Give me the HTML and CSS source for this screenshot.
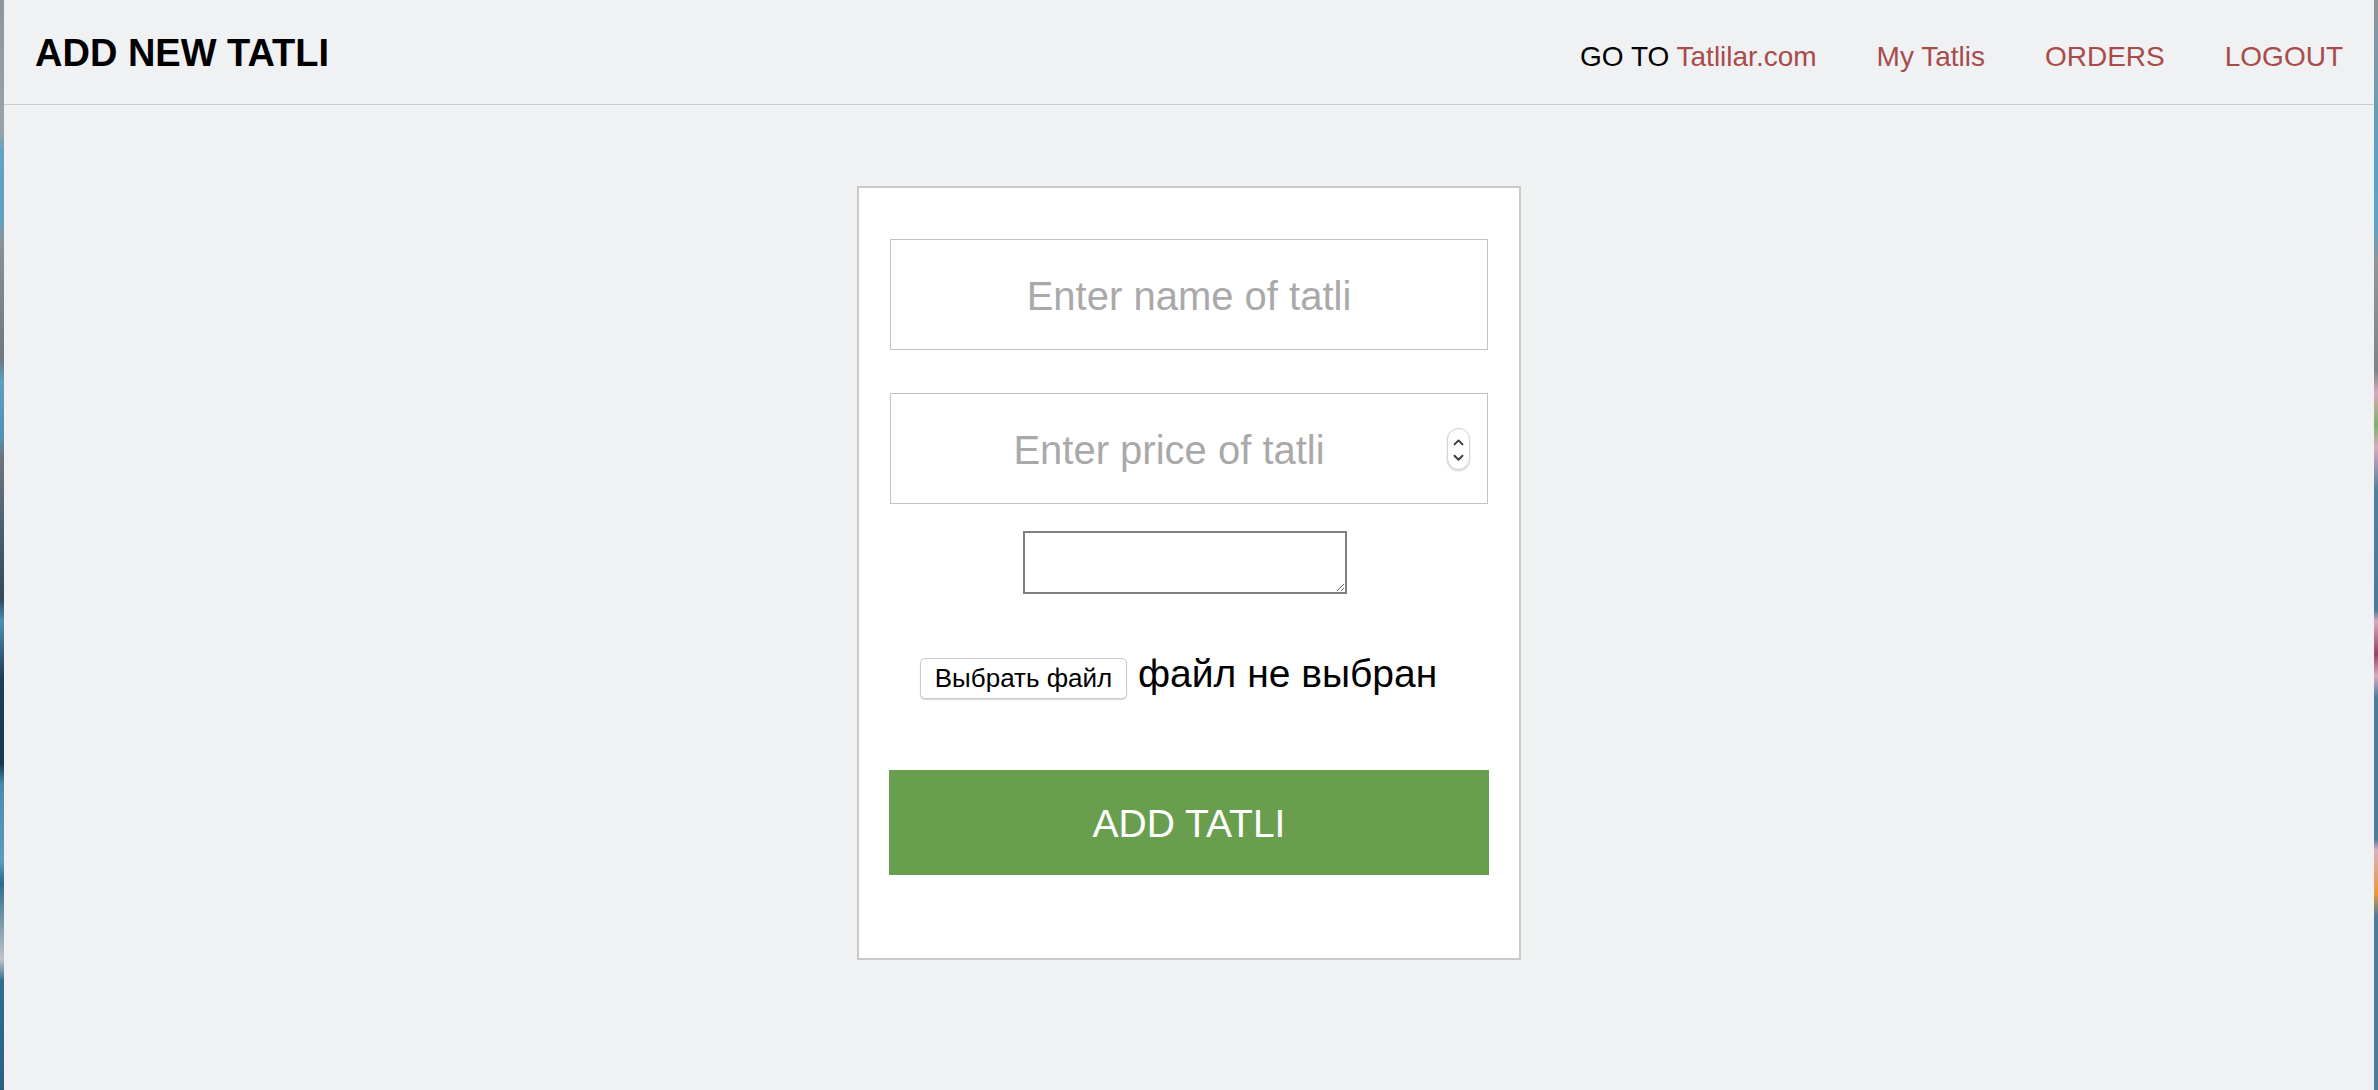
FILE: index.html
```html
<!DOCTYPE html>
<html lang="en">
<head>
<meta charset="utf-8">
<title>Add new tatli</title>
<link rel="stylesheet" href="styles.css">
</head>
<body>
<div class="screen">
  <div class="edge edge-left"></div>
  <div class="page">
    <header class="topbar">
      <h1 class="title">ADD NEW TATLI</h1>
      <nav class="nav">
        <span class="nav-item">GO TO <a class="link" href="#">Tatlilar.com</a></span>
        <a class="link" href="#">My Tatlis</a>
        <a class="link" href="#">ORDERS</a>
        <a class="link" href="#">LOGOUT</a>
      </nav>
    </header>
    <main class="content">
      <form class="card">
        <input class="field" type="text" placeholder="Enter name of tatli">
        <div class="field-wrap">
          <input class="field field-price" type="text" placeholder="Enter price of tatli">
          <span class="spinner">
            <svg width="22" height="41" viewBox="0 0 22 41">
              <path d="M6.8 15.2 L11 11 L15.2 15.2" fill="none" stroke="#3a3a3a" stroke-width="2" stroke-linecap="round" stroke-linejoin="round"/>
              <path d="M6.8 27 L11 31.2 L15.2 27" fill="none" stroke="#3a3a3a" stroke-width="2" stroke-linecap="round" stroke-linejoin="round"/>
            </svg>
          </span>
        </div>
        <textarea class="desc"></textarea>
        <div class="file-row">
          <span class="file-btn">Выбрать файл</span>
          <span class="file-label">файл не выбран</span>
        </div>
        <button class="submit" type="button">ADD TATLI</button>
      </form>
    </main>
  </div>
  <div class="edge edge-right"></div>
</div>
</body>
</html>
```

FILE: styles.css
```css
* {
  box-sizing: border-box;
}

html, body {
  margin: 0;
  padding: 0;
}

body {
  font-family: "Liberation Sans", Arial, sans-serif;
  background: #f0f1f3;
}

.screen {
  display: flex;
  height: 1090px;
  overflow: hidden;
}

.edge {
  width: 4px;
  flex: 0 0 4px;
}

.edge-left {
  background: linear-gradient(to bottom,
    #8d959d 0%, #9aa3ab 12%, #5fa4c6 14%, #5aa0c2 20%,
    #8a939b 22%, #6f7880 33%, #5ba0c3 35%, #4f94b8 40%,
    #6b757e 42%, #2f4a60 55%, #4c90b5 57%, #1f3e58 62%,
    #173650 70%, #4a8cb1 72%, #5a9dc1 79%, #2d6a90 81%,
    #c0c4c8 88%, #336d92 90%, #2a5f84 100%);
}

.edge-right {
  background: linear-gradient(to bottom,
    #8e959c 0%, #5aa0c2 14%, #5ea3c5 21%, #8e969d 24%,
    #7c858d 34%, #d7a8bb 36%, #7fb06a 39%, #d9aac0 41%,
    #4f7fa0 45%, #4b7b9c 56%, #d6a9c0 57%, #9a3f6a 60%,
    #d8aac0 62%, #4c7c9d 64%, #4c7c9d 77%, #dcb0c2 78%,
    #e59a3a 82%, #4c7c9d 84%, #4c7c9d 100%);
}

.page {
  flex: 1;
  display: flex;
  flex-direction: column;
  background: #f0f1f3;
}

.topbar {
  height: 105px;
  flex: 0 0 105px;
  display: flex;
  justify-content: space-between;
  align-items: baseline;
  padding: 32px 31px 0 31px;
  border-bottom: 1px solid #c9cacc;
}

.title {
  margin: 0;
  font-size: 38px;
  font-weight: 700;
  color: #000;
  line-height: normal;
}

.nav {
  display: flex;
  align-items: baseline;
  gap: 60px;
  font-size: 28px;
}

.nav-item {
  color: #000;
}

.link {
  color: #a94b4b;
  text-decoration: none;
}

.content {
  flex: 1;
  display: flex;
  justify-content: center;
  align-items: flex-start;
}

.card {
  width: 664px;
  margin-top: 81px;
  background: #fff;
  border: 2px solid #c9c9c9;
  padding: 51px 31px 83px 31px;
  display: flex;
  flex-direction: column;
}

.field {
  display: block;
  width: 598px;
  height: 111px;
  margin: 0;
  padding: 3px 0 0 0;
  border: 1px solid #c3c3c3;
  border-radius: 0;
  background: #fff;
  font-family: "Liberation Sans", Arial, sans-serif;
  font-size: 40px;
  text-align: center;
  color: #222;
  outline: none;
}

.field::placeholder {
  color: #a9a9a9;
}

.field-wrap {
  position: relative;
  margin-top: 43px;
}

.field-price {
  padding-right: 40px;
}

.spinner {
  position: absolute;
  top: 35px;
  right: 18px;
  width: 23px;
  height: 42px;
  border: 1px solid #d4d4d4;
  border-radius: 12px;
  background: #fff;
  box-shadow: 0 1px 2px rgba(0, 0, 0, 0.18);
  display: flex;
  align-items: center;
  justify-content: center;
}

.spinner svg {
  display: block;
}

.desc {
  display: block;
  align-self: flex-start;
  width: 324px;
  height: 63px;
  margin: 27px 0 0 133px;
  border: 2px solid #808080;
  border-radius: 0;
  background: #fff;
  resize: both;
  font-family: "Liberation Mono", monospace;
  font-size: 13px;
}

.file-row {
  display: flex;
  align-items: baseline;
  gap: 11px;
  margin-top: 58px;
  padding-left: 30px;
}

.file-btn {
  display: block;
  width: 207px;
  height: 41px;
  line-height: 39px;
  border: 1px solid #cacaca;
  border-radius: 5px;
  background: #fff;
  box-shadow: 0 1px 1px rgba(0, 0, 0, 0.16);
  font-size: 26px;
  text-align: center;
  color: #000;
}

.file-label {
  font-size: 39px;
  color: #000;
  line-height: normal;
}

.submit {
  display: block;
  width: 600px;
  height: 105px;
  margin: 71px -1px 0 -1px;
  padding-top: 3px;
  border: none;
  border-radius: 0;
  background: #6a9e4f;
  color: #fff;
  font-family: "Liberation Sans", Arial, sans-serif;
  font-size: 39px;
  cursor: pointer;
}
```
